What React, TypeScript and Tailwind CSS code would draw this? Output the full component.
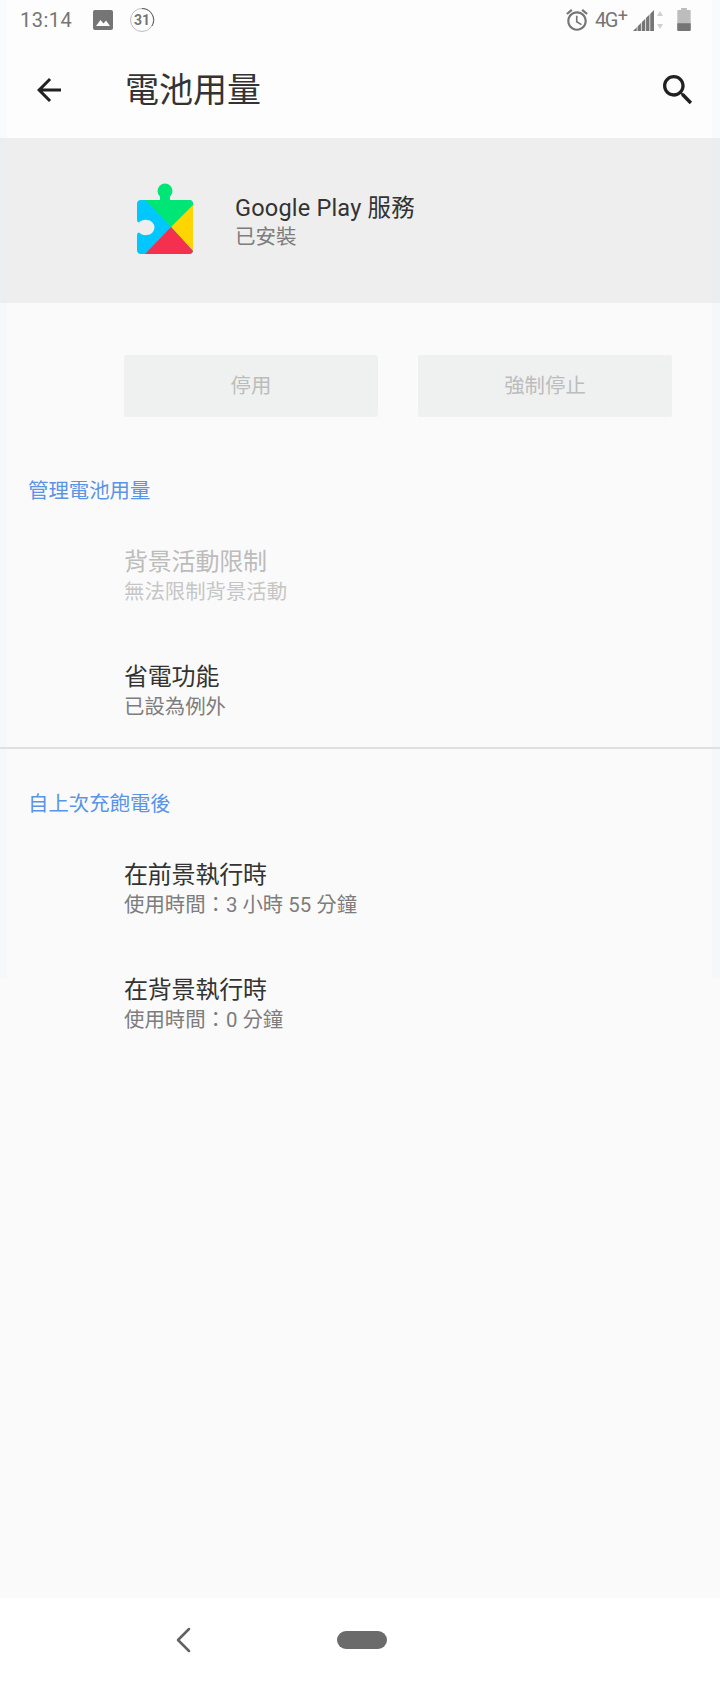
const cjk = "font-['Roboto','Noto_Sans_CJK_TC',sans-serif]";

function StatusBar() {
  return (
    <div className="h-[45px] flex items-center pb-[6px] pl-[20px] pr-[29px] text-[#757575]">
      <span className="text-[20px] leading-none tracking-[0.5px] w-[73px]">13:14</span>
      <svg width="20" height="20" viewBox="0 0 20 20">
        <rect width="20" height="20" rx="2" fill="#757575" />
        <path d="M3 16l4.500-6 3 3.500 2.500-3 4 5.500z" fill="#fff" />
      </svg>
      <svg width="26" height="26" viewBox="0 0 26 26" className="ml-[16px]">
        <circle cx="13" cy="13" r="11.500" fill="none" stroke="#bdbdbd" strokeWidth="1" />
        <path d="M13 1.500A11.500 11.500 0 0 1 23 19" fill="none" stroke="#616161" strokeWidth="1" />
        <text x="13" y="18" textAnchor="middle" fontSize="14" fontWeight="700" fill="#757575" fontFamily="Roboto">31</text>
      </svg>
      <div className="flex-1" />
      <svg width="26" height="26" viewBox="0 0 24 24" fill="#757575">
        <path d="M22 5.720l-4.600-3.860-1.290 1.530 4.600 3.860L22 5.720zM7.880 3.390L6.600 1.860 2 5.710l1.290 1.530 4.590-3.850zM12.500 8H11v6l4.750 2.850.750-1.230-4-2.370V8zM12 4c-4.970 0-9 4.030-9 9s4.030 9 9 9 9-4.030 9-9-4.030-9-9-9zm0 16c-3.870 0-7-3.130-7-7s3.130-7 7-7 7 3.130 7 7-3.130 7-7 7z" />
      </svg>
      <span className="ml-[5px] text-[20px] leading-none tracking-[-1.5px]">4G</span>
      <span className="ml-[1px] text-[18px] leading-none relative top-[-4px]">+</span>
      <svg width="32" height="24" viewBox="0 0 32 24" className="ml-[4px]">
        <path d="M1 23L22 2v21z" fill="#757575" />
        <path d="M5.200 23V17M9.400 23V13M13.600 23V9M17.800 23V5" stroke="#fdfdfd" strokeWidth="0.800" />
        <path d="M28 3l3 5h-6zM28 21l-3-5h6z" fill="#cfcfcf" />
      </svg>
      <svg width="14" height="23" viewBox="0 0 14 24" className="ml-[13px]">
        <path d="M4 0h6v2h3a1 1 0 0 1 1 1v20a1 1 0 0 1-1 1H1a1 1 0 0 1-1-1V3a1 1 0 0 1 1-1h3z" fill="#bdbdbd" />
        <path d="M0 16h14v7a1 1 0 0 1-1 1H1a1 1 0 0 1-1-1z" fill="#757575" />
      </svg>
    </div>
  );
}

function Toolbar() {
  return (
    <div className="h-[93px] flex items-center pb-[3px]">
      <svg width="36" height="36" viewBox="0 0 24 24" className="ml-[31px]" fill="#212121">
        <path d="M20 11H7.830l5.590-5.590L12 4l-8 8 8 8 1.410-1.410L7.830 13H20v-2z" />
      </svg>
      <h1 className="ml-[58px] text-[34px] leading-none text-[#333333]">電池用量</h1>
      <div className="flex-1" />
      <svg width="40" height="40" viewBox="0 0 24 24" className="mr-[22px]" fill="#212121">
        <path d="M15.500 14h-.790l-.280-.270C15.410 12.590 16 11.110 16 9.500 16 5.910 13.090 3 9.500 3S3 5.910 3 9.500 5.910 16 9.500 16c1.610 0 3.090-.590 4.230-1.570l.270.280v.790l5 4.990L20.490 19l-4.990-5zm-6 0C7.010 14 5 11.990 5 9.500S7.010 5 9.500 5 14 7.010 14 9.500 11.990 14 9.500 14z" />
      </svg>
    </div>
  );
}

function PlayIcon() {
  return (
    <svg width="56" height="71" viewBox="0 0 56 71">
      <defs>
        <clipPath id="tile">
          <path d="M4 17h48a4 4 0 0 1 4 4v46a4 4 0 0 1-4 4H4a4 4 0 0 1-4-4V52c0-1.500 1-2.500 2-2.500 2 2 5 3 8 2.500a7.500 7.500 0 0 0 0-15c-3-.500-6 .500-8 2.500-1 0-2-1-2-2.500V21a4 4 0 0 1 4-4z" />
        </clipPath>
      </defs>
      <circle cx="28" cy="8" r="7.500" fill="#00e676" />
      <rect x="23" y="10" width="10" height="8" fill="#00e676" />
      <g clipPath="url(#tile)">
        <rect width="56" height="71" fill="#00c8ff" />
        <path d="M8 17h48v5L34 44z" fill="#00e676" />
        <path d="M56 22v46L34 44z" fill="#ffd500" />
        <path d="M8 71l26-27 22 24v3z" fill="#f5304f" />
      </g>
    </svg>
  );
}

function AppHeader() {
  return (
    <div className="h-[165px] bg-[#eeeeee] flex items-center pl-[137px]">
      <div className="mb-[5px]"><PlayIcon /></div>
      <div className="ml-[42px] mt-[2px]">
        <div className="text-[23.500px] leading-[30px] text-[#333333] tracking-[0.2px]">Google Play 服務</div>
        <div className="text-[20.500px] leading-[28px] text-[#7d7d7d]">已安裝</div>
      </div>
    </div>
  );
}

function SectionTitle({ title }: { title: string }) {
  return <div className="pl-[28px] text-[20.400px] leading-[28px] text-[#5b93e6]">{title}</div>;
}

function Row({ title, sub, disabled }: { title: string; sub: string; disabled?: boolean }) {
  return (
    <div className="pl-[124px] h-[115px] flex flex-col justify-center">
      <div className={`text-[24px] leading-[32px] tracking-[-0.2px] ${disabled ? "text-[#bcbcbc]" : "text-[#333333]"}`}>{title}</div>
      <div className={`text-[20.400px] leading-[28px] ${disabled ? "text-[#c6c6c6]" : "text-[#7d7d7d]"}`}>{sub}</div>
    </div>
  );
}

export default function App() {
  return (
    <div className={`relative w-[720px] h-[1681px] bg-[#fafafa] flex flex-col overflow-hidden ${cjk}`}>
      <div className="bg-[#fdfdfd]">
        <StatusBar />
        <Toolbar />
      </div>
      <AppHeader />

      <div className="flex gap-[40px] pl-[124px] pr-[48px] mt-[52px]">
        <div className="flex-1 h-[62px] rounded-[2px] bg-[#eff0f0] flex items-center justify-center text-[20.400px] text-[#bcbcbc]">停用</div>
        <div className="flex-1 h-[62px] rounded-[2px] bg-[#eff0f0] flex items-center justify-center text-[20.400px] text-[#bcbcbc]">強制停止</div>
      </div>

      <div className="mt-[60px]">
        <SectionTitle title="管理電池用量" />
      </div>
      <div className="mt-[13px]">
        <Row title="背景活動限制" sub="無法限制背景活動" disabled />
        <Row title="省電功能" sub="已設為例外" />
      </div>
      <div className="h-[2px] bg-[#e0e0e0] mt-[-1px]" />

      <div className="mt-[41px]">
        <SectionTitle title="自上次充飽電後" />
      </div>
      <div className="mt-[13px]">
        <Row title="在前景執行時" sub="使用時間：3 小時 55 分鐘" />
        <Row title="在背景執行時" sub="使用時間：0 分鐘" />
      </div>

      <div className="flex-1" />
      <div className="h-[83px] bg-white flex items-center">
        <svg width="16" height="26" viewBox="0 0 16 26" className="ml-[175px]" fill="none" stroke="#616161" strokeWidth="2.500" strokeLinecap="round" strokeLinejoin="round">
          <path d="M14 2L3 13l11 11" />
        </svg>
        <div className="ml-[146px] w-[50px] h-[18px] rounded-full bg-[#6b6b6b]" />
      </div>

      {/* faint blue strips down both screen edges */}
      <div className="absolute left-0 top-0 w-[7px] h-[978px] bg-[#dcebff]/15 pointer-events-none" />
      <div className="absolute right-0 top-0 w-[8px] h-[978px] bg-[#dcebff]/15 pointer-events-none" />
    </div>
  );
}
